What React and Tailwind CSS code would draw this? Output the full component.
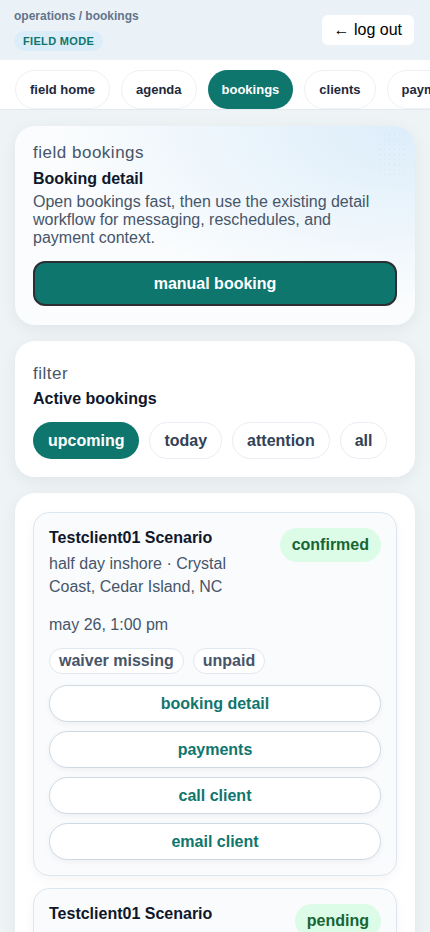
const navTabs = ['field home', 'agenda', 'bookings', 'clients', 'payments', 'settings']
const filters = ['upcoming', 'today', 'attention', 'all']

const bookings = [
  {
    name: 'Testclient01 Scenario',
    status: 'confirmed',
    trip: 'half day inshore · Crystal Coast, Cedar Island, NC',
    when: 'may 26, 1:00 pm',
    tags: ['waiver missing', 'unpaid'],
  },
  {
    name: 'Testclient01 Scenario',
    status: 'pending',
    trip: 'half day inshore · Crystal Coast, Cedar Island, NC',
    when: 'may 28, 7:00 am',
    tags: ['waiver missing', 'unpaid'],
  },
]

const actions = ['booking detail', 'payments', 'call client', 'email client']

function BookingCard({ b }) {
  return (
    <div className="rounded-[16px] border border-[#dde6ee] bg-[#f9fbfd] p-[15px] shadow-[0_4px_12px_rgba(15,23,42,0.04)]">
      <div className="flex items-start gap-[10px]">
        <div className="flex-1">
          <div className="text-[16px] font-bold leading-[20px] text-[#0f172a]">{b.name}</div>
          <div className="mt-[4px] text-[16px] leading-[23px] text-[#475569]">{b.trip}</div>
        </div>
        <span className="shrink-0 rounded-full bg-[#dcfce7] px-[12px] py-[7px] text-[16px] font-bold leading-[20px] text-[#166534]">
          {b.status}
        </span>
      </div>
      <div className="mt-[17px] text-[16px] leading-[20px] text-[#475569]">{b.when}</div>
      <div className="mt-[13px] flex gap-[9px]">
        {b.tags.map(t => (
          <span key={t} className="rounded-full border border-[#e2e8f0] bg-white px-[9px] text-[16px] font-bold leading-[24px] text-[#475569]">
            {t}
          </span>
        ))}
      </div>
      <div className="mt-[11px] flex flex-col gap-[9px]">
        {actions.map(a => (
          <button
            key={a}
            className="h-[37px] w-full rounded-full border border-[#cfd9e4] bg-white text-[16px] font-bold text-[#0f766e] shadow-[0_2px_6px_rgba(15,23,42,0.05)]"
          >
            {a}
          </button>
        ))}
      </div>
    </div>
  )
}

export default function App() {
  return (
    <div className="min-h-[932px] bg-[#eef3f6] font-['Liberation_Sans',Arial,sans-serif]">
      {/* Header */}
      <header className="flex h-[60px] items-start justify-between bg-[#eaf2f7] pl-[14px] pr-[16px]">
        <div className="pt-[9px]">
          <div className="text-[12px] font-bold leading-[15px] text-[#64748b]">operations / bookings</div>
          <span className="mt-[7px] inline-block rounded-full bg-[#dbedf8] px-[9px] text-[11px] font-bold uppercase leading-[20px] tracking-[0.03em] text-[#0f766e]">
            field mode
          </span>
        </div>
        <button className="mt-[15px] h-[30px] rounded-[6px] bg-white px-[12px] text-[16px] text-black">
          ← log out
        </button>
      </header>

      {/* Nav */}
      <nav className="flex gap-[11px] overflow-hidden border-b border-[#e3eaf0] bg-white px-[15px] pt-[10px]">
        {navTabs.map(t => (
          <span
            key={t}
            className={`shrink-0 rounded-full px-[14px] text-[13px] font-bold ${
              t === 'bookings'
                ? 'bg-[#0f766e] leading-[39px] text-white'
                : 'border border-[#edf1f5] leading-[37px] text-[#1e293b]'
            }`}
          >
            {t}
          </span>
        ))}
      </nav>

      <main className="flex flex-col gap-[16px] px-[15px] pt-[16px]">
        {/* Intro card */}
        <section className="relative overflow-hidden rounded-[20px] bg-[#fafcfd] px-[18px] pt-[16px] pb-[19px] shadow-[0_4px_16px_rgba(15,23,42,0.06)]">
          <div className="pointer-events-none absolute inset-0 bg-[radial-gradient(ellipse_at_top_right,#dcedfa_0%,rgba(220,237,250,0.45)_35%,transparent_62%)]" />
          <div className="pointer-events-none absolute right-[10px] top-[6px] h-[46px] w-[28px] bg-[radial-gradient(#cddceb_0.6px,transparent_0.7px)] bg-[length:5px_5px] opacity-60" />
          <div className="relative">
            <div className="text-[17px] leading-[22px] tracking-[0.03em] text-[#475569]">field bookings</div>
            <div className="mt-[5px] text-[16px] font-bold leading-[20px] text-[#0f172a]">Booking detail</div>
            <p className="mt-[4px] pr-[12px] text-[16px] leading-[18px] text-[#475569]">
              Open bookings fast, then use the existing detail workflow for messaging, reschedules, and payment context.
            </p>
            <button className="mt-[14px] h-[45px] w-full rounded-[12px] border-2 border-[#2b2f33] bg-[#0f766e] text-[16px] font-bold text-white">
              manual booking
            </button>
          </div>
        </section>

        {/* Filter card */}
        <section className="rounded-[20px] bg-white px-[18px] pt-[22px] pb-[18px] shadow-[0_4px_16px_rgba(15,23,42,0.06)]">
          <div className="text-[17px] leading-[22px] tracking-[0.03em] text-[#475569]">filter</div>
          <div className="mt-[4px] text-[16px] font-bold leading-[20px] text-[#0f172a]">Active bookings</div>
          <div className="mt-[13px] flex gap-[10px]">
            {filters.map(f => (
              <span
                key={f}
                className={`rounded-full text-[16px] font-bold ${
                  f === 'upcoming'
                    ? 'bg-[#0f766e] px-[15px] leading-[37px] text-white'
                    : 'border border-[#e8eef3] px-[14px] leading-[35px] text-[#334155]'
                }`}
              >
                {f}
              </span>
            ))}
          </div>
        </section>

        {/* Bookings list */}
        <section className="flex flex-col gap-[12px] rounded-[20px] bg-white px-[18px] pt-[19px] pb-[18px] shadow-[0_4px_16px_rgba(15,23,42,0.06)]">
          {bookings.map((b, i) => (
            <BookingCard key={i} b={b} />
          ))}
        </section>
      </main>
    </div>
  )
}
